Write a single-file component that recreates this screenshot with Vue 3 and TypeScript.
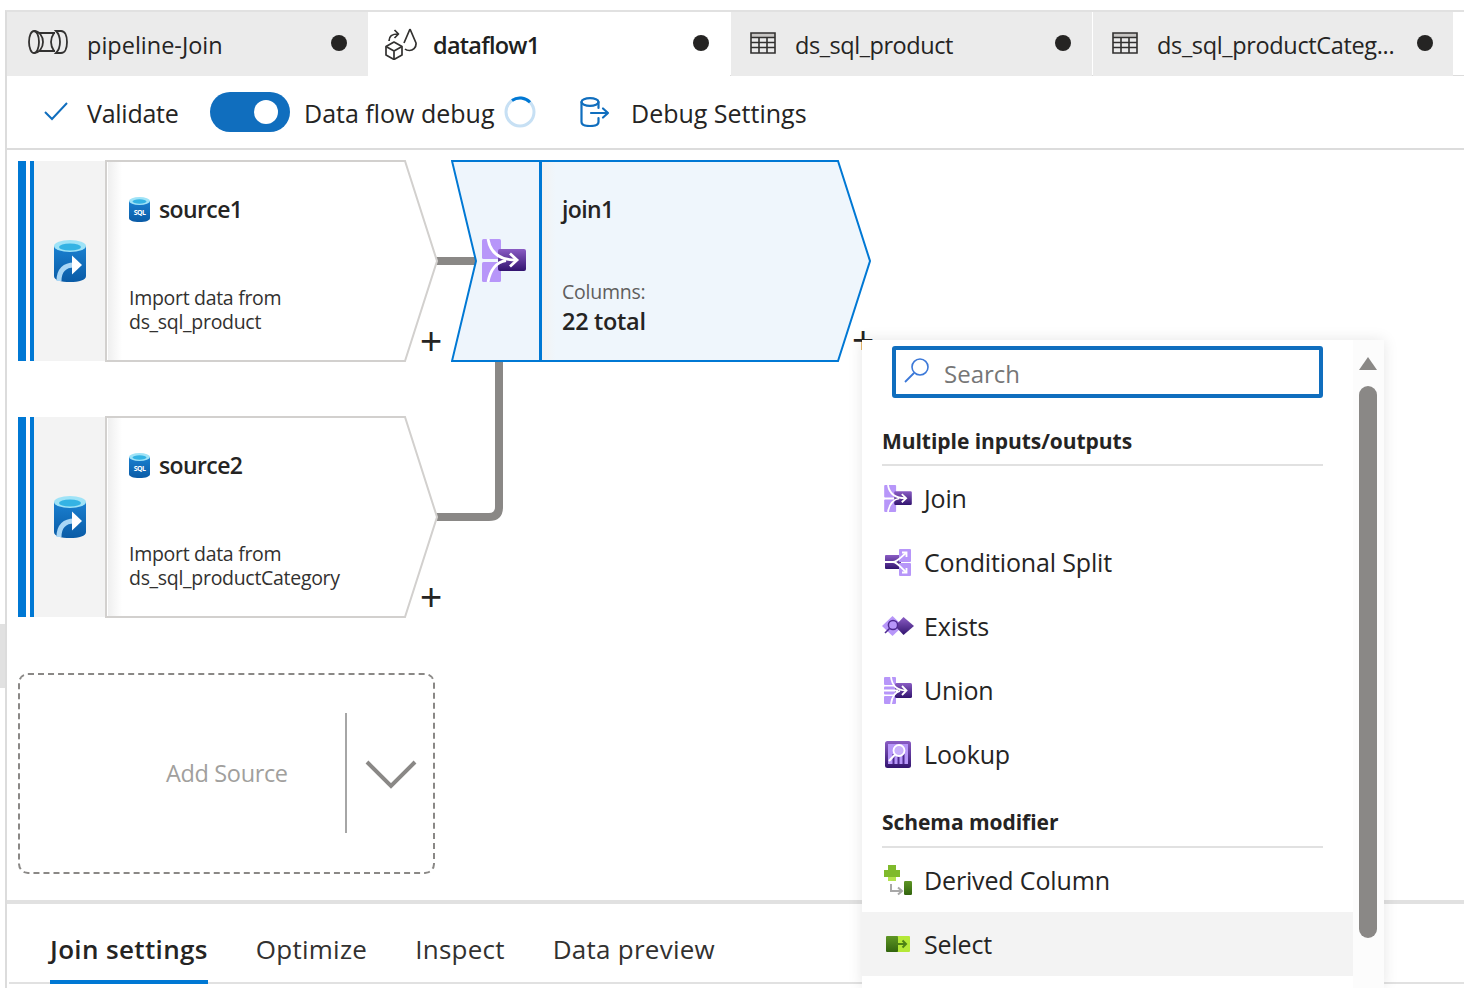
<script setup lang="ts">
interface Tab { label: string; icon: string; active?: boolean }
interface SourceNode { title: string; lines: string[]; y: number }
interface MenuItem { label: string; icon: string; w: number; h: number; hover?: boolean }
interface MenuGroup { title: string; items: MenuItem[] }

const tabs: Tab[] = [
  { label: 'pipeline-Join', icon: 'i-pipeline' },
  { label: 'dataflow1', icon: 'i-dataflow', active: true },
  { label: 'ds_sql_product', icon: 'i-table' },
  { label: 'ds_sql_productCateg...', icon: 'i-table' },
]

const sources: SourceNode[] = [
  { title: 'source1', lines: ['Import data from', 'ds_sql_product'], y: 10 },
  { title: 'source2', lines: ['Import data from', 'ds_sql_productCategory'], y: 266 },
]

const groups: MenuGroup[] = [
  {
    title: 'Multiple inputs/outputs',
    items: [
      { label: 'Join', icon: 'i-join', w: 28, h: 27 },
      { label: 'Conditional Split', icon: 'i-split', w: 28, h: 27 },
      { label: 'Exists', icon: 'i-exists', w: 32, h: 22 },
      { label: 'Union', icon: 'i-union', w: 28, h: 27 },
      { label: 'Lookup', icon: 'i-lookup', w: 28, h: 27 },
    ],
  },
  {
    title: 'Schema modifier',
    items: [
      { label: 'Derived Column', icon: 'i-derived', w: 28, h: 31 },
      { label: 'Select', icon: 'i-select', w: 24, h: 18, hover: true },
    ],
  },
]

const bottomTabs = ['Join settings', 'Optimize', 'Inspect', 'Data preview']
</script>

<template>
  <div class="page">
    <svg class="defs" aria-hidden="true">
      <defs>
        <linearGradient id="g-purple" x1="0" y1="0" x2="0" y2="1">
          <stop offset="0" stop-color="#8a5cc4" />
          <stop offset="1" stop-color="#32146f" />
        </linearGradient>
        <linearGradient id="g-blue" x1="0" y1="0" x2="0" y2="1">
          <stop offset="0" stop-color="#1a80d0" />
          <stop offset="1" stop-color="#0a5ba6" />
        </linearGradient>
        <linearGradient id="g-green" x1="0" y1="0" x2="0" y2="1">
          <stop offset="0" stop-color="#5e9624" />
          <stop offset="1" stop-color="#32640e" />
        </linearGradient>
        <linearGradient id="g-fade" x1="0" y1="0" x2="1" y2="0">
          <stop offset="0" stop-color="#efefef" />
          <stop offset="1" stop-color="#fff" />
        </linearGradient>
        <linearGradient id="g-fade-blue" x1="0" y1="0" x2="1" y2="0">
          <stop offset="0" stop-color="#f2f2f2" />
          <stop offset="1" stop-color="#eff6fc" />
        </linearGradient>
      </defs>
      <symbol id="i-pipeline" viewBox="0 0 40 24">
        <g fill="none" stroke="#323130" stroke-width="1.8">
          <ellipse cx="6" cy="12" rx="5" ry="11" />
          <path d="M6 1C11 1 15 6 15 12S11 23 6 23" />
          <path d="M11 3H27M11 21H27" />
          <path d="M26 3C24 6 23 9 23 12S24 18 26 21" />
          <path d="M28 1H33C37 1 39 6 39 12S37 23 33 23H28C31 20 32 16 32 12S31 4 28 1Z" />
        </g>
      </symbol>
      <symbol id="i-dataflow" viewBox="0 0 32 32">
        <g fill="none" stroke="#323130" stroke-width="1.7" stroke-linejoin="round">
          <path d="M9 14L17 18.5V27L9 31.5L1 27V18.5Z" />
          <path d="M1 18.5L9 23L17 18.5M9 23V31.5" />
          <path d="M25 1L31 15C31.5 20 27.5 22.5 24.5 22.5C22.5 22.5 21 22 20 21M25 1L19 15" />
          <path d="M4 13C4 8 7 6 13 6M9.5 2L13.5 6L9.5 10" />
        </g>
      </symbol>
      <symbol id="i-table" viewBox="0 0 26 22">
        <rect x="1" y="1" width="24" height="4.5" fill="#c8c6c4" />
        <path d="M1 1H25V21H1ZM1 5.5H25M1 10.5H25M1 15.5H25M9 5.5V21M17 5.5V21" fill="none" stroke="#323130" stroke-width="1.6" />
      </symbol>
      <symbol id="i-db" viewBox="0 0 30 30">
        <g fill="none" stroke="#106ebe" stroke-width="2.2" stroke-linecap="round" stroke-linejoin="round">
          <ellipse cx="10" cy="5" rx="8.5" ry="3.8" />
          <path d="M1.5 5V25C1.5 27.5 5 29 10 29S18.5 27.5 18.5 25V21M18.5 5V11" />
          <path d="M11 16H28M23 11.5L28 16L23 20.5" />
        </g>
      </symbol>
      <symbol id="i-cyl" viewBox="0 0 32 42">
        <path d="M0 6V36C0 40 7 42 16 42S32 40 32 36V6Z" fill="url(#g-blue)" />
        <ellipse cx="16" cy="6" rx="16" ry="6" fill="#9fe3f7" />
        <ellipse cx="16" cy="7" rx="11" ry="3.6" fill="#34b3e4" />
        <path d="M5 41C5 30 11 25 20 25" fill="none" stroke="#a9d6f5" stroke-width="5" />
        <path d="M18 15.5L28 25L18 34.5Z" fill="#fff" />
      </symbol>
      <symbol id="i-sql" viewBox="0 0 21 25">
        <path d="M0 4V21C0 23.5 4 25 10.5 25S21 23.5 21 21V4Z" fill="url(#g-blue)" />
        <ellipse cx="10.5" cy="4" rx="10.5" ry="4" fill="#9fe3f7" />
        <ellipse cx="10.5" cy="4.5" rx="7" ry="2.2" fill="#34b3e4" />
      </symbol>
      <symbol id="i-join" viewBox="0 0 44 43">
        <rect x="0" y="0" width="19" height="20" rx="1.5" fill="#b796f9" />
        <rect x="0" y="23" width="19" height="20" rx="1.5" fill="#b796f9" />
        <rect x="16" y="10" width="28" height="22" rx="2" fill="url(#g-purple)" />
        <g fill="none" stroke="#fff" stroke-width="2.8">
          <path d="M6 0C8 12 16 21 34 21" />
          <path d="M6 43C8 32 14 23 24 21.5" />
          <path d="M28 14.5L35 21L28 27.5" />
        </g>
      </symbol>
      <symbol id="i-split" viewBox="0 0 28 27">
        <rect x="1" y="6" width="16" height="14" rx="1" fill="url(#g-purple)" />
        <rect x="15" y="0" width="12" height="13" rx="1" fill="#b796f9" />
        <rect x="15" y="14" width="12" height="13" rx="1" fill="#b796f9" />
        <g fill="none" stroke="#fff" stroke-width="1.8">
          <path d="M1 13H9C13 13 16 9 22 4" />
          <path d="M9 13C13 13 16 18 22 23" />
          <path d="M18 3.5H22.5V8M18 23.5H22.5V19" />
        </g>
      </symbol>
      <symbol id="i-exists" viewBox="0 0 32 22">
        <path d="M10.5 1L21 11L10.5 21L0 11Z" fill="#b796f9" />
        <path d="M21.5 2L32 11L21.5 20L13 11Z" fill="url(#g-purple)" />
        <circle cx="11" cy="10" r="4.6" fill="#b796f9" stroke="#4f2a92" stroke-width="1.5" />
        <path d="M7.5 13.5L3 18" stroke="#4f2a92" stroke-width="1.6" />
      </symbol>
      <symbol id="i-union" viewBox="0 0 28 27">
        <rect x="0" y="0" width="12" height="8" rx="1" fill="#b796f9" />
        <rect x="0" y="9.5" width="12" height="8" rx="1" fill="#b796f9" />
        <rect x="0" y="19" width="12" height="8" rx="1" fill="#b796f9" />
        <rect x="11" y="6" width="17" height="15" rx="1.5" fill="url(#g-purple)" />
        <g fill="none" stroke="#fff" stroke-width="1.8">
          <path d="M7 0C8 8 12 13.5 22 13.5" />
          <path d="M7 27C8 20 11 15 16 13.8M0 13.5H14" />
          <path d="M18 9L22.5 13.5L18 18" />
        </g>
      </symbol>
      <symbol id="i-lookup" viewBox="0 0 28 27">
        <rect x="1" y="0" width="26" height="27" rx="2.5" fill="url(#g-purple)" />
        <rect x="4" y="3" width="20" height="20" fill="#b796f9" />
        <path d="M9.5 13V23M14.5 13V23M19.5 13V23" stroke="#4f2a92" stroke-width="2" />
        <circle cx="15" cy="9.5" r="5.5" fill="#c9b0fb" stroke="#fff" stroke-width="1.8" />
        <path d="M11 13.5L5 20" stroke="#fff" stroke-width="2" />
      </symbol>
      <symbol id="i-derived" viewBox="0 0 28 31">
        <path d="M4 0H12V5H16V12H12V16H4V12H0V5H4Z" fill="#7fba2c" />
        <path d="M4 12H12V16H4Z" fill="#b4e34f" />
        <path d="M7 19V26H17M14 22.5L18 26L14 29.5" fill="none" stroke="#a8a8a8" stroke-width="2" />
        <rect x="20" y="16" width="8" height="14" rx="1.2" fill="url(#g-green)" />
      </symbol>
      <symbol id="i-select" viewBox="0 0 24 18">
        <rect x="10" y="1" width="14" height="16" rx="1" fill="#b4e837" />
        <rect x="0" y="1" width="12" height="16" rx="1" fill="url(#g-green)" />
        <path d="M10 9H20M16.5 5.5L20 9L16.5 12.5" fill="none" stroke="#4d8115" stroke-width="2" />
      </symbol>
    </svg>

    <span class="edge-mark"></span>

    <div class="frame">
      <nav class="tabs">
        <div v-for="t in tabs" :key="t.label" class="tab" :class="{ active: t.active }">
          <svg class="tab-icon" :class="t.icon"><use :href="'#' + t.icon" /></svg>
          <span class="tab-label">{{ t.label }}</span>
          <span class="dot"></span>
        </div>
      </nav>

      <div class="toolbar">
        <svg class="check" viewBox="0 0 24 20"><path d="M1 11L8 18L23 2" fill="none" stroke="#106ebe" stroke-width="2" /></svg>
        <span class="tb-text validate">Validate</span>
        <span class="toggle"><span class="knob"></span></span>
        <span class="tb-text debug">Data flow debug</span>
        <svg class="spinner" viewBox="0 0 32 32">
          <circle cx="16" cy="16" r="14" fill="none" stroke="#c7e0f4" stroke-width="3" />
          <path d="M8 4.5A14 14 0 0 1 26 6.2" fill="none" stroke="#0078d4" stroke-width="3" />
        </svg>
        <svg class="db"><use href="#i-db" /></svg>
        <span class="tb-text">Debug Settings</span>
      </div>

      <section class="canvas">
        <svg class="wires" width="1457" height="750">
          <path d="M429 111H470" fill="none" stroke="#8a8886" stroke-width="8" />
          <path d="M429 367H482Q492 367 492 357V212" fill="none" stroke="#8a8886" stroke-width="8" />
        </svg>

        <article v-for="s in sources" :key="s.title" class="node source" :style="{ top: s.y + 'px' }">
          <svg class="shape" width="420" height="202" viewBox="0 0 420 202">
            <path d="M88 1H387L419 101L387 201H88Z" fill="#fff" stroke="#d2d0ce" stroke-width="2" />
            <rect x="90" y="2" width="14" height="198" fill="url(#g-fade)" />
          </svg>
          <div class="side">
            <svg class="cyl"><use href="#i-cyl" /></svg>
          </div>
          <div class="body">
            <h3 class="title">
              <svg class="sql" viewBox="0 0 21 25">
                <use href="#i-sql" width="21" height="25" />
                <text x="10.5" y="17.5" text-anchor="middle" class="sql-text">SQL</text>
              </svg>
              {{ s.title }}
            </h3>
            <p class="desc">{{ s.lines[0] }}<br />{{ s.lines[1] }}</p>
          </div>
          <span class="plus">+</span>
        </article>

        <article class="node join">
          <svg class="shape" width="420" height="202" viewBox="0 0 420 202">
            <path d="M1 1H89V201H1L25 101Z" fill="#eef5fc" stroke="#0078d4" stroke-width="2" />
            <path d="M90 1H387L419 101L387 201H90Z" fill="#eff6fc" stroke="#0078d4" stroke-width="2" />
            <rect x="91" y="2" width="14" height="198" fill="url(#g-fade-blue)" />
          </svg>
          <div class="join-side"><svg class="join-icon"><use href="#i-join" /></svg></div>
          <div class="join-body">
            <h3 class="title">join1</h3>
            <p class="cols">Columns:</p>
            <p class="total">22 total</p>
          </div>
          <span class="plus">+</span>
        </article>

        <div class="add">
          <span class="add-label">Add Source</span>
          <span class="add-div"></span>
          <svg class="add-chev" viewBox="0 0 52 30"><path d="M2 3L26 27L50 3" fill="none" stroke="#8a8886" stroke-width="4" /></svg>
        </div>
      </section>

      <footer class="bottom">
        <span v-for="(b, i) in bottomTabs" :key="b" class="btab" :class="{ on: i === 0 }">{{ b }}</span>
      </footer>
    </div>

    <aside class="menu">
      <div class="menu-list">
        <div class="search">
          <svg class="search-i" viewBox="0 0 26 26"><circle cx="16" cy="10" r="8" fill="none" stroke="#3b78d8" stroke-width="1.6" /><path d="M10 16L1 25" stroke="#3b78d8" stroke-width="1.8" /></svg>
          <span class="search-text">Search</span>
        </div>
        <div v-for="g in groups" :key="g.title" class="group">
          <h4 class="group-title">{{ g.title }}</h4>
          <div v-for="it in g.items" :key="it.label" class="item" :class="{ hover: it.hover }">
            <span class="item-icon" :class="it.icon"><svg :width="it.w" :height="it.h"><use :href="'#' + it.icon" /></svg></span>
            <span>{{ it.label }}</span>
          </div>
        </div>
      </div>
      <div class="scroll">
        <span class="arrow"></span>
        <span class="thumb"></span>
      </div>
    </aside>
  </div>
</template>

<style>
html, body { margin: 0; padding: 0; background: #fff; overflow: hidden; }
</style>

<style scoped>
.page {
  position: relative;
  width: 1464px;
  height: 988px;
  overflow: hidden;
  background: #fff;
  padding-top: 10px;
  box-sizing: border-box;
  font-family: "Open Sans", "Noto Sans", sans-serif;
  color: #252423;
}
.defs { position: absolute; width: 0; height: 0; }
.sql-text { font: 700 7px "Open Sans", sans-serif; fill: #fff; }
.edge-mark { position: absolute; left: 0; top: 624px; width: 5px; height: 64px; background: #e1e1e1; }
.frame {
  margin-left: 5px;
  height: 978px;
  border-left: 2px solid #dcdcdc;
  border-top: 2px solid #e1e1e1;
  box-sizing: border-box;
  display: flex;
  flex-direction: column;
}
.tabs { display: flex; height: 64px; flex: none; box-shadow: inset 0 -1px 0 #dcdcdc; }
.tab {
  width: 361px;
  flex: none;
  background: #ebebeb;
  display: flex;
  align-items: center;
  box-sizing: border-box;
  padding-left: 19px;
  position: relative;
  font-size: 23.5px;
  letter-spacing: -0.45px;
  color: #252423;
}
.tab:nth-child(1) { letter-spacing: 0; }
.tab:nth-child(2) { width: 362px; padding-left: 17px; letter-spacing: -0.75px; }
.tab:nth-child(3) { margin-left: 1px; }
.tab:nth-child(4) { margin-left: 1px; width: 360px; letter-spacing: -0.35px; }
.tab.active { background: #fff; font-weight: 600; color: #201f1e; }
.tab-icon { flex: none; }
.i-pipeline { width: 40px; height: 24px; margin: -4px 19px 0 2px; }
.i-dataflow { width: 32px; height: 32px; margin: 0 16px 0 0; }
.i-table { width: 26px; height: 22px; margin: -2px 19px 0 0; }
.tab-label { white-space: nowrap; position: relative; top: 1px; }
.dot { position: absolute; right: 21px; top: 23px; width: 16px; height: 16px; border-radius: 50%; background: #252423; }
.tab:nth-child(4) .dot { right: 20px; }

.toolbar {
  height: 74px;
  box-sizing: border-box;
  border-bottom: 2px solid #dcdcdc;
  display: flex;
  align-items: center;
  padding-left: 37px;
  flex: none;
}
.tb-text { font-size: 25px; white-space: nowrap; color: #252423; position: relative; top: 1px; }
.check { width: 24px; height: 20px; margin: -2px 19px 0 0; flex: none; }
.validate { width: 123px; letter-spacing: -0.25px; }
.toggle {
  width: 80px; height: 40px; border-radius: 20px; background: #106ebe; flex: none;
  display: flex; align-items: center; justify-content: flex-end; box-sizing: border-box; padding-right: 12px;
  margin-right: 14px;
}
.knob { width: 24px; height: 24px; border-radius: 50%; background: #fff; }
.debug { width: 200px; }
.spinner { width: 32px; height: 32px; flex: none; margin: 0 44px 0 0; }
.db { width: 30px; height: 30px; flex: none; margin: 0 21px 0 0; }

.canvas { position: relative; height: 750px; flex: none; border-bottom: 4px solid #e1e1e1; box-sizing: content-box; }
.wires { position: absolute; left: 0; top: 0; }
.node { position: absolute; width: 420px; height: 202px; }
.shape { position: absolute; left: 0; top: 0; }
.source { left: 11px; }
.side {
  position: absolute; left: 0; top: 1px; width: 89px; height: 200px; box-sizing: border-box;
  background: #f3f3f3;
  border-left: 8px solid #0078d4;
  border-right: 2px solid #d2d0ce;
  display: flex; align-items: center; justify-content: center;
  padding-left: 9px;
}
.side::before {
  content: ""; position: absolute; left: 4px; top: 0; width: 4px; height: 100%; background: #0078d4;
}
.side::after {
  content: ""; position: absolute; left: 0; top: 0; width: 4px; height: 100%; background: #fff;
}
.cyl { width: 32px; height: 42px; flex: none; margin-top: -1px; }
.body { position: absolute; left: 111px; top: 1px; width: 290px; height: 200px; }
.title {
  margin: 0; position: absolute; top: 32px; left: 0; font-size: 23px; line-height: 32px; font-weight: 600;
  letter-spacing: -0.6px; color: #252423; display: flex; align-items: center; white-space: nowrap;
}
.sql { width: 21px; height: 25px; margin-right: 9px; flex: none; }
.desc { position: absolute; margin: 0; top: 125px; left: 0; font-size: 19.5px; line-height: 24px; letter-spacing: -0.3px; color: #323130; white-space: nowrap; }
.plus { position: absolute; left: 402px; top: 164px; width: 22px; text-align: center; font-size: 38px; line-height: 34px; color: #252423; font-family: "Liberation Sans", sans-serif; }

.join { left: 444px; top: 10px; width: 420px; }
.join-side { position: absolute; left: 31px; top: 79px; }
.join-icon { display: block; width: 44px; height: 43px; }
.join-body { position: absolute; left: 111px; top: 1px; width: 280px; height: 200px; }
.join-body .title { top: 32px; left: 0; }
.cols { position: absolute; margin: 0; top: 118px; left: 0; font-size: 19.5px; line-height: 26px; letter-spacing: -0.25px; color: #605e5c; }
.total { position: absolute; margin: 0; top: 143px; left: 0; font-size: 23.5px; line-height: 34px; font-weight: 600; letter-spacing: -0.3px; color: #252423; }
.join .plus { left: 401px; top: 163px; }

.add {
  position: absolute; left: 11px; top: 523px; width: 417px; height: 201px; box-sizing: border-box;
  border: 2px dashed #8a8886; border-radius: 10px;
}
.add-label { font-size: 23.5px; letter-spacing: -0.35px; color: #a19f9d; position: absolute; left: 146px; top: 82px; white-space: nowrap; }
.add-div { position: absolute; left: 325px; top: 38px; width: 2px; height: 120px; background: #a6a6a6; }
.add-chev { position: absolute; left: 345px; top: 84px; width: 52px; height: 30px; }

.bottom {
  flex: 1; display: flex; gap: 48px; padding-left: 43px; position: relative; align-items: flex-start;
}
.bottom::after { content: ""; position: absolute; left: 2px; right: 0; top: 78px; height: 2px; background: #e1e1e1; }
.btab { font-size: 26px; letter-spacing: 0.25px; line-height: 34px; height: 76px; padding-top: 28px; box-sizing: border-box; color: #323130; position: relative; white-space: nowrap; z-index: 1; }
.btab.on { font-weight: 600; color: #252423; border-bottom: 4px solid #0078d4; height: 80px; letter-spacing: 0.35px; }

.menu {
  position: absolute; left: 862px; top: 340px; width: 522px; height: 648px;
  background: #fff; box-shadow: 0 0 14px rgba(0,0,0,0.10);
  display: flex;
}
.menu-list { width: 491px; flex: none; box-sizing: border-box; padding-top: 6px; }
.search {
  margin-left: 30px; width: 431px; height: 52px; box-sizing: border-box;
  border: 4px solid #106ebe; border-radius: 3px;
  display: flex; align-items: center; padding-left: 8px;
  font-size: 24px; color: #767676;
}
.search-text { position: relative; top: 1px; }
.search-i { width: 26px; height: 26px; margin: -4px 14px 0 0; flex: none; }
.group-title {
  margin: 0 30px 0 20px; height: 68px; box-sizing: border-box;
  border-bottom: 2px solid #e1e1e1;
  font-size: 21px; font-weight: 700; letter-spacing: -0.05px; line-height: 28px;
  padding-top: 29px; color: #252423;
}
.group + .group .group-title { height: 62px; padding-top: 22px; }
.item {
  height: 64px; display: flex; align-items: center; padding-left: 20px;
  font-size: 25px; letter-spacing: -0.15px; color: #252423;
}
.item.hover { background: #f3f3f3; }
.item-icon { width: 42px; flex: none; display: flex; align-items: center; padding-left: 2px; box-sizing: border-box; }
.item-icon.i-exists { padding-left: 0; }
.item-icon.i-select { padding-left: 4px; }
.item-icon svg { display: block; }
.scroll { flex: 1; background: #fcfcfc; position: relative; }
.arrow {
  position: absolute; left: 6px; top: 17px; width: 0; height: 0;
  border-left: 9px solid transparent; border-right: 9px solid transparent; border-bottom: 13px solid #8a8886;
}
.thumb { position: absolute; left: 6px; top: 46px; width: 18px; height: 552px; border-radius: 9px; background: #8a8886; }
</style>
